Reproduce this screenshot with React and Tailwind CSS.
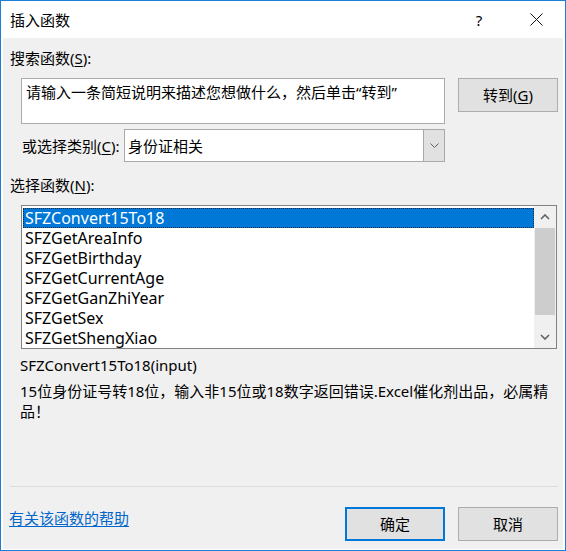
export default function App() {
  const items = [
    "SFZConvert15To18",
    "SFZGetAreaInfo",
    "SFZGetBirthday",
    "SFZGetCurrentAge",
    "SFZGetGanZhiYear",
    "SFZGetSex",
    "SFZGetShengXiao",
  ];
  return (
    <div className="w-[566px] h-[551px] border border-[#1b7fd6] bg-white flex flex-col text-[15px] leading-[20px] text-black font-['Noto_Sans','Noto_Sans_CJK_SC',sans-serif]">
      {/* Title bar */}
      <div className="h-[37px] shrink-0 flex items-center">
        <span className="pl-[9px]">插入函数</span>
        <span className="ml-auto w-[20px] text-center">?</span>
        <svg className="ml-[41px] mr-[22px]" width="13" height="13" viewBox="0 0 13 13">
          <path d="M0.5 0.5 L12.5 12.5 M12.5 0.5 L0.5 12.5" stroke="#111" strokeWidth="1" fill="none" />
        </svg>
      </div>

      {/* Body */}
      <div className="flex-1 mx-[2px] mb-[1px] bg-[#f0f0f0] flex flex-col pl-[7px] pr-[5px]">
        <div className="pt-[10px]">
          搜索函数(<span className="underline underline-offset-2">S</span>):
        </div>

        <div className="mt-[10px] flex items-start">
          <div className="ml-[11px] w-[424px] h-[46px] bg-white border border-[#ababab] pl-[4px] pt-[3px]">
            请输入一条简短说明来描述您想做什么，然后单击“转到”
          </div>
          <button className="ml-auto w-[100px] h-[34px] bg-[#e1e1e1] border border-[#adadad] flex items-center justify-center">
            <span>
              转到(<span className="underline underline-offset-2">G</span>)
            </span>
          </button>
        </div>

        <div className="mt-[5px] flex items-center h-[33px]">
          <div className="w-[114px] pl-[12px]">
            或选择类别(<span className="underline underline-offset-2">C</span>):
          </div>
          <div className="w-[321px] h-[33px] bg-white border border-[#a9a9a9] flex">
            <div className="flex-1 pl-[3px] flex items-center">身份证相关</div>
            <div className="w-[21px] h-full bg-[#e1e1e1] border-l border-[#a9a9a9] flex items-center justify-center">
              <svg width="9" height="5" viewBox="0 0 9 5">
                <path d="M0.5 0.5 L4.5 4.5 L8.5 0.5" stroke="#606060" strokeWidth="1" fill="none" />
              </svg>
            </div>
          </div>
        </div>

        <div className="mt-[13px]">
          选择函数(<span className="underline underline-offset-2">N</span>):
        </div>

        <div className="mt-[10px] ml-[11px] w-[536px] h-[144px] bg-white border border-[#828282] flex overflow-hidden text-[16px]">
          <div className="flex-1 pt-[2px] pl-[1px] overflow-hidden">
            {items.map((it, i) =>
              i === 0 ? (
                <div
                  key={it}
                  className="h-[20px] leading-[18px] bg-[#0078d7] text-white border border-dotted border-[#1a2a3a] pl-[1px]"
                >
                  {it}
                </div>
              ) : (
                <div key={it} className="h-[20px] leading-[20px] pl-[2px]">
                  {it}
                </div>
              )
            )}
          </div>
          <div className="w-[22px] h-full bg-[#f0f0f0] flex flex-col">
            <div className="h-[22px] flex items-center justify-center">
              <svg width="10" height="6" viewBox="0 0 10 6">
                <path d="M1 5 L5 1 L9 5" stroke="#606060" strokeWidth="1.6" fill="none" />
              </svg>
            </div>
            <div className="mx-[1px] h-[87px] bg-[#cdcdcd]" />
            <div className="flex-1" />
            <div className="h-[22px] flex items-center justify-center">
              <svg width="10" height="6" viewBox="0 0 10 6">
                <path d="M1 1 L5 5 L9 1" stroke="#606060" strokeWidth="1.6" fill="none" />
              </svg>
            </div>
          </div>
        </div>

        <div className="mt-[6px] ml-[10px]">SFZConvert15To18(input)</div>
        <div className="mt-[6px] ml-[10px]">
          15位身份证号转18位，输入非15位或18数字返回错误.Excel催化剂出品，必属精
          <br />
          品！
        </div>

        <div className="mt-auto">
          <div className="h-px bg-[#dcdcdc]" />
          <div className="pt-[20px] pb-[8px] flex items-start">
            <a className="mt-[1px] -ml-[1px] text-[#0066cc] underline underline-offset-2 cursor-pointer">
              有关该函数的帮助
            </a>
            <button className="ml-auto w-[100px] h-[34px] bg-[#e1e1e1] border-2 border-[#0078d7] flex items-center justify-center">
              确定
            </button>
            <button className="ml-[13px] w-[100px] h-[34px] bg-[#e1e1e1] border border-[#adadad] flex items-center justify-center">
              取消
            </button>
          </div>
        </div>
      </div>
    </div>
  );
}
